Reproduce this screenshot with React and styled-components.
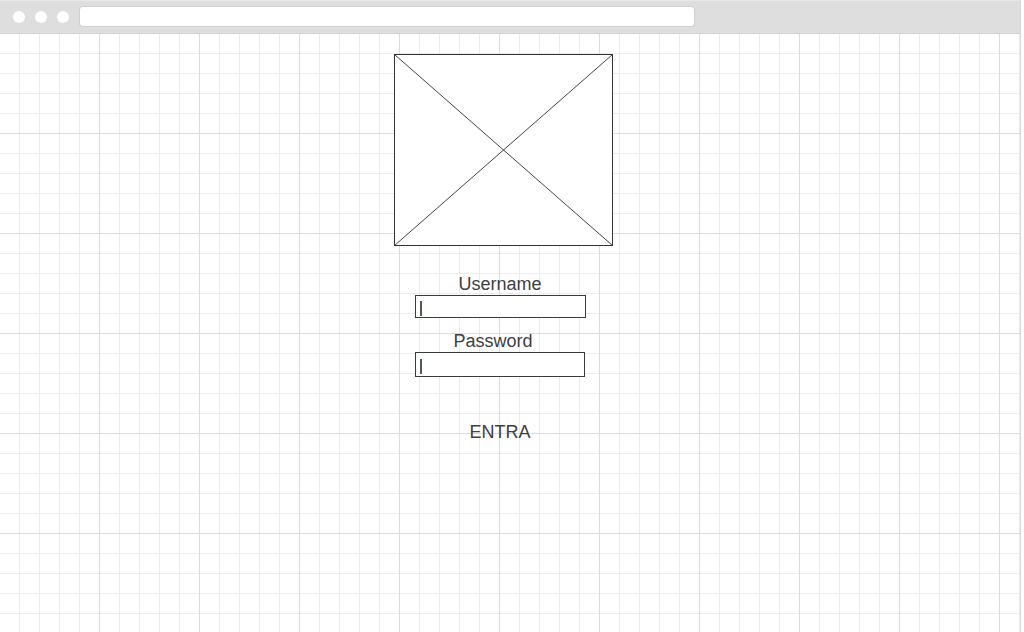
import React from 'react'
import styled, { createGlobalStyle } from 'styled-components'

const Global = createGlobalStyle`
  html, body { margin: 0; padding: 0; background: #ffffff; }
  body { font-family: "Liberation Sans", Arial, sans-serif; color: #333; }
`

const Frame = styled.div`
  width: 1021px;
  height: 632px;
  border-right: 1px solid #d6d6d6;
  box-sizing: border-box;
  display: flex;
  flex-direction: column;
  overflow: hidden;
`

const Chrome = styled.div`
  height: 34px;
  flex: none;
  box-sizing: border-box;
  background: #dedede;
  border-top: 1px solid #e8e8e8;
  border-bottom: 1px solid #d2d2d2;
  display: flex;
  align-items: center;
  padding: 0 0 1px 13px;
  gap: 10px;
`

const Dot = styled.span`
  width: 12px;
  height: 12px;
  border-radius: 50%;
  background: #fff;
  flex: none;
`

const UrlBar = styled.div`
  margin-left: 1px;
  width: 614px;
  height: 19px;
  background: #fff;
  border-radius: 3px;
  box-shadow: 0 0 0 1px #d0d0d0;
`

const Stage = styled.div`
  flex: 1;
  background-color: #fff;
  background-image:
    linear-gradient(to right, transparent 99px, #dcdcdc 99px),
    linear-gradient(to bottom, transparent 99px, #dcdcdc 99px),
    linear-gradient(to right, transparent 19px, #ececec 19px),
    linear-gradient(to bottom, transparent 19px, #ececec 19px);
  background-size: 100px 100px, 100px 100px, 20px 20px, 20px 20px;
  display: flex;
  flex-direction: column;
  align-items: center;
  padding: 20px 20px 0 0;
`

const Placeholder = styled.svg`
  display: block;
  margin-left: 6px;
  flex: none;
`

const Label = styled.div`
  font-size: 18px;
  line-height: 21px;
  color: #404040;
  margin-top: ${({ $top }) => $top}px;
  margin-left: ${({ $shift }) => $shift || 0}px;
`

const Field = styled.div`
  box-sizing: border-box;
  width: ${({ $w }) => $w}px;
  height: ${({ $h }) => $h}px;
  border: 1px solid #3a3a3a;
  background: #fff;
  display: flex;
  align-items: center;
  padding-left: 4px;
`

const Caret = styled.span`
  display: block;
  width: 2px;
  height: 15px;
  margin-top: 3px;
  background: #4e5e4e;
`

const Enter = styled.div`
  margin-top: 45px;
  font-size: 18px;
  line-height: 21px;
  color: #404040;
`

export default function App() {
  return (
    <>
      <Global />
      <Frame>
        <Chrome>
          <Dot />
          <Dot />
          <Dot />
          <UrlBar />
        </Chrome>
        <Stage>
          <Placeholder width="219" height="192" viewBox="0 0 219 192">
            <rect x="0.5" y="0.5" width="218" height="191" fill="#fff" stroke="#333" strokeWidth="1" />
            <line x1="0.5" y1="0.5" x2="218.5" y2="191.5" stroke="#444" strokeWidth="1" />
            <line x1="218.5" y1="0.5" x2="0.5" y2="191.5" stroke="#444" strokeWidth="1" />
          </Placeholder>
          <Label $top={28}>Username</Label>
          <Field $w={171} $h={23}><Caret /></Field>
          <Label $top={13} $shift={-14}>Password</Label>
          <Field $w={170} $h={25}><Caret /></Field>
          <Enter>ENTRA</Enter>
        </Stage>
      </Frame>
    </>
  )
}
